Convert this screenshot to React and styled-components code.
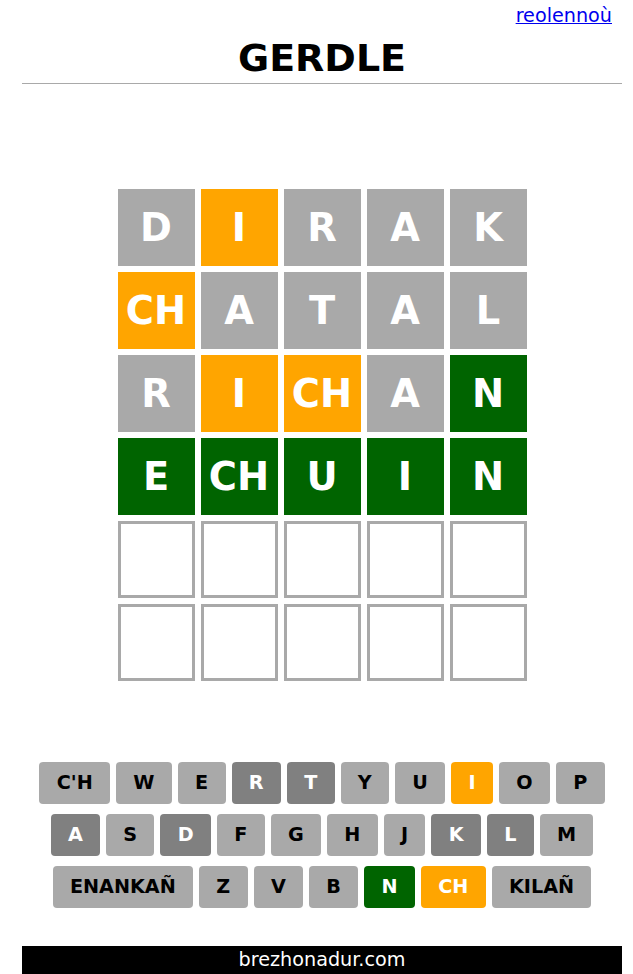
import React from "react";
import styled, { createGlobalStyle } from "styled-components";

const GlobalStyle = createGlobalStyle`
  html, body {
    margin: 0;
    padding: 0;
    background: #ffffff;
    font-family: "DejaVu Sans", Verdana, sans-serif;
  }
`;

const Page = styled.div`
  width: 600px;
  margin-left: 22px;
  display: flex;
  flex-direction: column;
`;

const TopBar = styled.div`
  display: flex;
  justify-content: flex-end;
  padding: 4px 10px 0 0;
  font-size: 19.2px;
`;

const HelpLink = styled.a`
  color: #0000ee;
  text-decoration: underline;
`;

const Title = styled.h1`
  margin: 9px 0 0;
  padding-bottom: 1px;
  text-align: center;
  font-size: 38px;
  font-weight: bold;
  line-height: 1.2;
  border-bottom: 1px solid #a9a9a9;
`;

const Board = styled.div`
  align-self: center;
  margin-top: 105px;
  display: grid;
  grid-template-columns: repeat(5, 77px);
  grid-auto-rows: 77px;
  gap: 6px;
`;

const tileColors = {
  absent: "#a9a9a9",
  present: "#ffa500",
  correct: "#006400",
};

const Tile = styled.div`
  box-sizing: border-box;
  display: flex;
  align-items: center;
  justify-content: center;
  font-size: 38.4px;
  font-weight: bold;
  color: #ffffff;
  background: ${({ $state }) => tileColors[$state] || "#ffffff"};
  border: ${({ $state }) =>
    $state ? `1px solid ${tileColors[$state]}` : "3px solid #a9a9a9"};
`;

const Keyboard = styled.div`
  margin-top: 81px;
  display: flex;
  flex-direction: column;
  gap: 10px;
`;

const KeyRow = styled.div`
  display: flex;
  justify-content: center;
  gap: 6px;
`;

const keyColors = {
  unused: ["#a9a9a9", "#000000"],
  absent: ["#808080", "#ffffff"],
  present: ["#ffa500", "#ffffff"],
  correct: ["#006400", "#ffffff"],
};

const Key = styled.button`
  height: 42px;
  padding: 0 17.3px;
  border: none;
  border-radius: 4px;
  font-family: "DejaVu Sans", Verdana, sans-serif;
  font-size: 19.2px;
  font-weight: bold;
  background: ${({ $state }) => keyColors[$state][0]};
  color: ${({ $state }) => keyColors[$state][1]};
`;

const Footer = styled.footer`
  margin-top: 38px;
  height: 28px;
  background: #000000;
  color: #ffffff;
  display: flex;
  align-items: center;
  justify-content: center;
  font-size: 19.2px;
`;

const A = "absent";
const P = "present";
const C = "correct";

const guesses = [
  [["D", A], ["I", P], ["R", A], ["A", A], ["K", A]],
  [["CH", P], ["A", A], ["T", A], ["A", A], ["L", A]],
  [["R", A], ["I", P], ["CH", P], ["A", A], ["N", C]],
  [["E", C], ["CH", C], ["U", C], ["I", C], ["N", C]],
];

const keyRows = [
  [["C'H"], ["W"], ["E"], ["R", A], ["T", A], ["Y"], ["U"], ["I", P], ["O"], ["P"]],
  [["A", A], ["S"], ["D", A], ["F"], ["G"], ["H"], ["J"], ["K", A], ["L", A], ["M"]],
  [["ENANKAÑ"], ["Z"], ["V"], ["B"], ["N", C], ["CH", P], ["KILAÑ"]],
];

export default function App() {
  const rows = [...guesses, ...Array.from({ length: 2 }, () => Array(5).fill(["", null]))];

  return (
    <>
      <GlobalStyle />
      <Page>
        <TopBar>
          <HelpLink href="#">reolennoù</HelpLink>
        </TopBar>
        <Title>GERDLE</Title>
        <Board>
          {rows.map((row, r) =>
            row.map(([letter, state], c) => (
              <Tile key={`${r}-${c}`} $state={state}>
                {letter}
              </Tile>
            ))
          )}
        </Board>
        <Keyboard>
          {keyRows.map((row, r) => (
            <KeyRow key={r}>
              {row.map(([label, state]) => (
                <Key key={label} $state={state || "unused"}>
                  {label}
                </Key>
              ))}
            </KeyRow>
          ))}
        </Keyboard>
        <Footer>brezhonadur.com</Footer>
      </Page>
    </>
  );
}
